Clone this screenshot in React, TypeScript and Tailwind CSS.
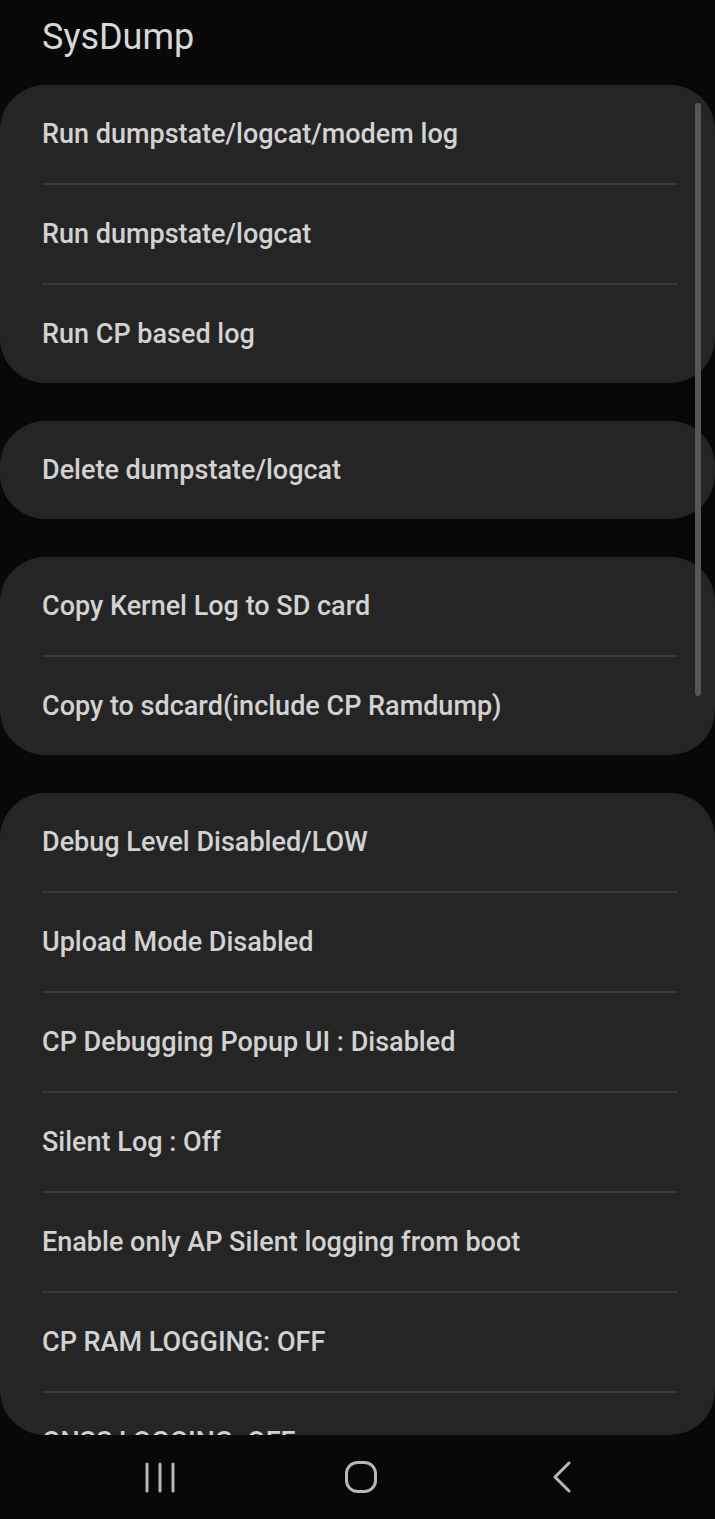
const groups: string[][] = [
  ['Run dumpstate/logcat/modem log', 'Run dumpstate/logcat', 'Run CP based log'],
  ['Delete dumpstate/logcat'],
  ['Copy Kernel Log to SD card', 'Copy to sdcard(include CP Ramdump)'],
];

const settings = [
  'Debug Level Disabled/LOW',
  'Upload Mode Disabled',
  'CP Debugging Popup UI : Disabled',
  'Silent Log : Off',
  'Enable only AP Silent logging from boot',
  'CP RAM LOGGING: OFF',
  'GNSS LOGGING: OFF',
];

function Row({ label, last }: { label: string; last: boolean }) {
  return (
    <div className="pl-[42px] pr-[37px]">
      <div
        className={`flex items-center text-[27px] font-medium text-[#d2d2d2] ${
          last ? 'h-[98px]' : 'h-[100px] border-b-2 border-[#3a3a3a]'
        }`}
      >
        {label}
      </div>
    </div>
  );
}

export default function App() {
  return (
    <div
      className="relative w-[715px] h-[1519px] bg-[#080808] overflow-hidden flex flex-col"
      style={{ fontFamily: 'Roboto, "Noto Sans", sans-serif' }}
    >
      {/* Header */}
      <div className="h-[85px] shrink-0 px-[42px] pt-[14px]">
        <h1 className="text-[36px] leading-[46px] text-[#d8d8d8]">SysDump</h1>
      </div>

      {/* List */}
      <div className="flex-1 flex flex-col gap-[38px] overflow-hidden rounded-b-[45px]">
        {groups.map((items, gi) => (
          <div key={gi} className="shrink-0 bg-[#252525] rounded-[45px]">
            {items.map((label, i) => (
              <Row key={label} label={label} last={i === items.length - 1} />
            ))}
          </div>
        ))}
        <div className="shrink-0 bg-[#252525] rounded-t-[45px]">
          {settings.map((label, i) => (
            <Row key={label} label={label} last={i === settings.length - 1} />
          ))}
        </div>
      </div>

      {/* Scrollbar */}
      <div className="absolute left-[695px] top-[103px] w-[6px] h-[593px] rounded-full bg-[#565656]" />

      {/* Nav bar */}
      <div className="h-[84px] shrink-0 flex items-center pl-[110px] gap-[101px] text-[#b8b8b8]">
        <div className="w-[100px] flex justify-center">
          <svg width="30" height="31" viewBox="0 0 30 31">
            <g stroke="currentColor" strokeWidth="3" strokeLinecap="round">
              <line x1="2" y1="2" x2="2" y2="29" />
              <line x1="15" y1="2" x2="15" y2="29" />
              <line x1="28" y1="2" x2="28" y2="29" />
            </g>
          </svg>
        </div>
        <div className="w-[100px] flex justify-center">
          <svg width="32" height="32" viewBox="0 0 32 32">
            <rect x="1.5" y="1.5" width="29" height="29" rx="11" fill="none" stroke="currentColor" strokeWidth="3" />
          </svg>
        </div>
        <div className="w-[100px] flex justify-center">
          <svg width="20" height="32" viewBox="0 0 20 32">
            <path d="M17 2 L3 16 L17 30" fill="none" stroke="currentColor" strokeWidth="3" strokeLinecap="round" strokeLinejoin="round" />
          </svg>
        </div>
      </div>
    </div>
  );
}
